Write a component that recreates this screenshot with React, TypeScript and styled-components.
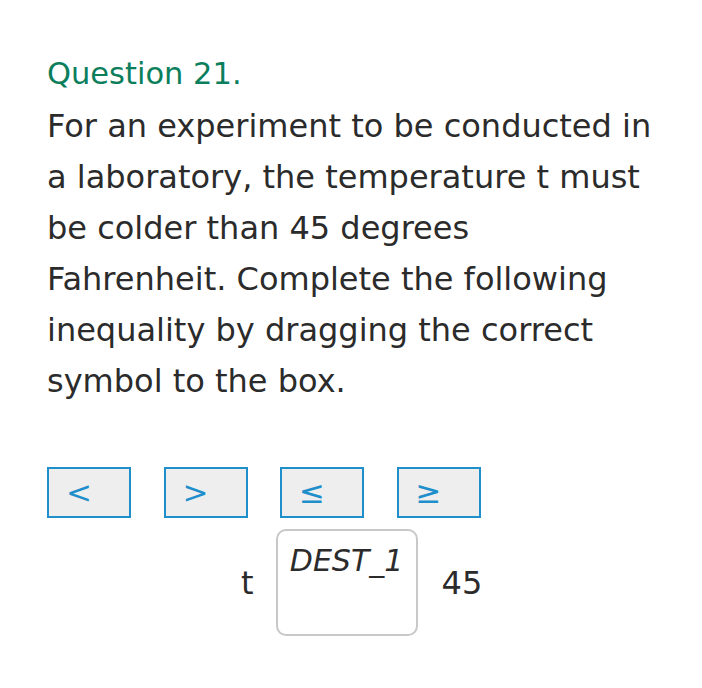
import React from "react";
import styled, { createGlobalStyle } from "styled-components";

const Global = createGlobalStyle`
  html, body { margin: 0; padding: 0; background: #fff; }
  body { font-family: "DejaVu Sans", "Open Sans", sans-serif; }
`;

const Page = styled.div`
  padding: 52px 0 0 47px;
  width: 620px;
`;

const Title = styled.h2`
  margin: 0;
  font-weight: normal;
  font-size: 30.5px;
  line-height: 44px;
  color: #0b7e5c;
`;

const Prompt = styled.p`
  margin: 5px 0 0;
  font-size: 32px;
  line-height: 51px;
  color: #2b2b2b;
  width: 607px;
`;

const Choices = styled.div`
  display: flex;
  gap: 32.5px;
  margin-top: 60px;
`;

const Choice = styled.div`
  box-sizing: border-box;
  width: 84px;
  height: 51px;
  border: 2px solid #1f8fcc;
  background: #eeeeee;
  color: #1f8fcc;
  font-size: 31px;
  line-height: 47px;
  padding-left: 17px;
`;

const Equation = styled.div`
  display: flex;
  align-items: center;
  margin: 11px 0 0 194px;
  font-size: 32px;
  color: #2b2b2b;
`;

const Variable = styled.span`
  margin-right: 22px;
`;

const Dest = styled.div`
  box-sizing: border-box;
  width: 142px;
  height: 107px;
  border: 2px solid #c8c8c8;
  border-radius: 10px;
  text-align: center;
  font-style: italic;
  font-size: 30px;
  line-height: 60px;
  color: #2b2b2b;
`;

const Value = styled.span`
  margin-left: 24px;
`;

export default function App() {
  const symbols = ["<", ">", "≤", "≥"];
  return (
    <>
      <Global />
      <Page>
        <Title>Question 21.</Title>
        <Prompt>
          For an experiment to be conducted in a laboratory, the temperature t
          must be colder than 45 degrees Fahrenheit. Complete the following
          inequality by dragging the correct symbol to the box.
        </Prompt>
        <Choices>
          {symbols.map((s) => (
            <Choice key={s}>{s}</Choice>
          ))}
        </Choices>
        <Equation>
          <Variable>t</Variable>
          <Dest>DEST_1</Dest>
          <Value>45</Value>
        </Equation>
      </Page>
    </>
  );
}
